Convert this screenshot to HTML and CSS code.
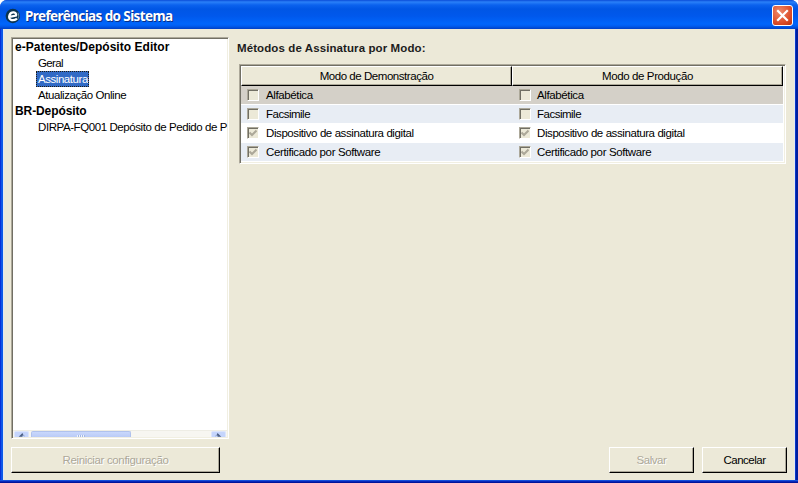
FILE: index.html
```html
<!DOCTYPE html>
<html lang="pt-BR">
<head>
<meta charset="utf-8">
<title>Preferências do Sistema</title>
<link rel="stylesheet" href="styles.css">
</head>
<body>
<div class="window">
  <header class="titlebar">
    <svg class="app-icon" width="16" height="16" viewBox="0 0 16 16"><circle cx="7.8" cy="8" r="7.2" fill="#0b3450"/><path d="M4.5 8.8L11 7.6C12.2 3.8 6.2 3.2 4.6 7C3 11.4 7 13.8 12 10.7" fill="none" stroke="#fff" stroke-width="2.3"/><path d="M13 4.5Q15 8 12.5 12" fill="none" stroke="#6f93ad" stroke-width="1"/></svg>
    <h1 class="title">Preferências do Sistema</h1>
    <button class="close" aria-label="Fechar"><svg width="19" height="19" viewBox="0 0 19 19"><path d="M5 5L14 14M14 5L5 14" stroke="#fff" stroke-width="2.2" stroke-linecap="square"/></svg></button>
  </header>
  <div class="body">
    <main class="main">
      <nav class="tree">
        <ul class="nodes">
          <li class="group"><span class="group-a">e-Patentes/Depósito Editor</span></li>
          <li class="leaf"><span class="geral">Geral</span></li>
          <li class="leaf"><span class="selected">Assinatura</span></li>
          <li class="leaf"><span class="online">Atualização Online</span></li>
          <li class="group"><span class="group-b">BR-Depósito</span></li>
          <li class="leaf"><span class="form">DIRPA-FQ001 Depósito de Pedido de P</span></li>
        </ul>
        <div class="scrollbar">
          <span class="arrow"><svg width="14" height="5" viewBox="0 0 14 5"><path d="M8 1L4 5H8V3.5H10V5" fill="#4d6185"/></svg></span>
          <span class="thumb"><i class="grip"></i></span>
          <span class="arrow end"><svg width="14" height="5" viewBox="0 0 14 5"><path d="M6 1L10 5H6V3.5H4V5" fill="#4d6185"/></svg></span>
        </div>
      </nav>
      <section class="panel">
        <h2 class="heading">Métodos de Assinatura por Modo:</h2>
        <div class="grid">
          <div class="th"><span class="demo">Modo de Demonstração</span></div>
          <div class="th"><span class="prod">Modo de Produção</span></div>
          <div class="td current"><i class="box"></i><span class="alfa">Alfabética</span></div>
          <div class="td current second"><i class="box"></i><span class="alfa">Alfabética</span></div>
          <div class="td tint"><i class="box"></i><span class="facs">Facsimile</span></div>
          <div class="td tint second"><i class="box"></i><span class="facs">Facsimile</span></div>
          <div class="td"><i class="box"><svg class="tick" width="8" height="8" viewBox="0 0 8 8"><path d="M.5 3.5L3 6L7.5 1.5" fill="none" stroke="#aca899" stroke-width="2"/></svg></i><span class="disp">Dispositivo de assinatura digital</span></div>
          <div class="td second"><i class="box"><svg class="tick" width="8" height="8" viewBox="0 0 8 8"><path d="M.5 3.5L3 6L7.5 1.5" fill="none" stroke="#aca899" stroke-width="2"/></svg></i><span class="disp">Dispositivo de assinatura digital</span></div>
          <div class="td tint"><i class="box"><svg class="tick" width="8" height="8" viewBox="0 0 8 8"><path d="M.5 3.5L3 6L7.5 1.5" fill="none" stroke="#aca899" stroke-width="2"/></svg></i><span class="cert">Certificado por Software</span></div>
          <div class="td tint second"><i class="box"><svg class="tick" width="8" height="8" viewBox="0 0 8 8"><path d="M.5 3.5L3 6L7.5 1.5" fill="none" stroke="#aca899" stroke-width="2"/></svg></i><span class="cert">Certificado por Software</span></div>
        </div>
      </section>
    </main>
    <footer class="footer">
      <button class="btn reset" disabled>Reiniciar configuração</button>
      <button class="btn save" disabled>Salvar</button>
      <button class="btn cancel">Cancelar</button>
    </footer>
  </div>
  <div class="frame-bottom"></div>
</div>
</body>
</html>
```
FILE: styles.css
```css
* { box-sizing: border-box; }
body { margin: 0; background: #fff; font: 11.5px/16px "Liberation Sans", Arial, sans-serif; color: #000; overflow: hidden; }
.window { width: 798px; height: 483px; border-radius: 7px 7px 0 0; background: linear-gradient(90deg, #0831d9 0 1px, #1055e8 1px 2px, #0c5be8 2px 3px, #0848d8 3px 795px, #0838c8 795px 796px, #001ea0 796px); overflow: hidden; display: flex; flex-direction: column; }
.titlebar { height: 29px; flex: none; display: flex; align-items: center; padding: 2px 5px 0 5px; background: linear-gradient(180deg, #0a4cd8 0, #2a80f8 2px, #0b62ee 5px, #0056e5 9px, #0058ec 16px, #0066fb 24px, #005df0 26px, #0040c4 29px); }
.app-icon { flex: none; }
.title { margin: 0 0 0 4px; font: bold 13.5px/18px "Noto Sans", sans-serif; letter-spacing: -.6px; color: #fff; text-shadow: 1px 1px 0 #0a2f86; white-space: nowrap; }
.close { margin-left: auto; width: 21px; height: 21px; padding: 0; border: 1px solid #fff; border-radius: 3px; background: radial-gradient(circle at 35% 30%, #ee8a6c, #dc4b26 65%, #b8330e); display: grid; place-items: center; }
.body { margin: 0 3px; height: 451px; background: #ece9d8; padding: 8px 7px 0; display: flex; flex-direction: column; border-left: 1px solid #e4e8f2; border-right: 1px solid #e4e8f2; }
.frame-bottom { height: 3px; background: linear-gradient(#1450dc 0 1px, #0828b8 1px 2px, #00149a 2px); }
.main { display: flex; gap: 9px; height: 402px; }
.tree { width: 218px; height: 402px; flex: none; background: #fff; border: 1px solid; border-color: #aca899 #fff #fff #aca899; box-shadow: inset 1px 1px #716f64, inset -1px -1px #f1efe2; padding: 1px; display: flex; flex-direction: column; overflow: hidden; }
.nodes { list-style: none; margin: 0; padding: 0; flex: 1; }
.nodes li { height: 16px; white-space: nowrap; display: flex; }
.group { padding-left: 2px; font-weight: bold; font-size: 12px; }
.leaf { padding-left: 25px; }
.group-a { letter-spacing: .04px; }
.group-b { letter-spacing: -.1px; }
.geral { letter-spacing: -.65px; }
.online { letter-spacing: -.43px; }
.form { letter-spacing: -.42px; }
.selected { background: #316ac5; color: #fff; outline: 1px dotted #201c10; outline-offset: -1px; letter-spacing: -.45px; margin-left: -2px; padding: 0 1px 0 2px; }
.scrollbar { height: 7px; flex: none; display: flex; background: #f7f6f1; border-top: 1px solid #eeede5; padding-left: 1px; }
.arrow { width: 15px; height: 6px; background: #c5d5fc; border: 1px solid #dce5fb; border-bottom: 0; border-radius: 2px 2px 0 0; display: flex; }
.end { margin-left: auto; margin-right: 1px; }
.thumb { width: 100px; height: 6px; margin-left: 2px; background: linear-gradient(#c9d8fc, #bacbf6); border: 1px solid #b0c2ed; border-bottom: 0; border-radius: 2px 2px 0 0; display: flex; justify-content: center; }
.grip { width: 8px; height: 2px; margin-top: 3px; background: repeating-linear-gradient(90deg, #eef4fe 0 1px, #a3b7e5 1px 2px); }
.panel { flex: 1; min-width: 0; padding-top: 3px; }
.heading { margin: 0 0 8px -1px; font: bold 11.5px/16px "Liberation Sans", Arial, sans-serif; letter-spacing: .1px; color: #1c1c1c; white-space: nowrap; }
.grid { width: 547px; height: 100px; margin-left: 1px; display: grid; grid-template-columns: 271px 271px; grid-template-rows: 20px repeat(4, 19px); background: #fff; border: 1px solid; border-color: #aca899 #fff #fff #aca899; box-shadow: inset 1px 1px #716f64, inset -1px -1px #f1efe2; padding: 1px; }
.th { background: #ece9d8; border: 1px solid; border-color: #fff #000 #000 #fff; box-shadow: inset -1px -1px #aca899; display: flex; justify-content: center; align-items: center; line-height: 16px; }
.demo, .prod { white-space: nowrap; }
.demo { letter-spacing: -.45px; }
.prod { letter-spacing: -.4px; }
.td { background: #fff; border-bottom: 1px solid #fff; display: flex; align-items: center; padding-left: 6px; white-space: nowrap; }
.td.current { background: #d4d0c8; }
.td.tint { background: #e8edf4; }
.box { width: 12px; height: 12px; margin-right: 7px; background: #ece9d8; border: 1px solid; border-color: #aca899 #fff #fff #aca899; box-shadow: inset 1px 1px #716f64; display: grid; place-items: center; }
.second { padding-left: 7px; }
.second .box { margin-right: 6px; }
.tick { display: block; }
.alfa, .cert { letter-spacing: -.38px; }
.facs { letter-spacing: -.5px; }
.disp { letter-spacing: -.41px; }
.footer { display: flex; margin-top: 8px; height: 26px; }
.btn { height: 26px; padding: 0; border: 1px solid; border-color: #fff #000 #000 #fff; border-radius: 0; background: #ece9d8; box-shadow: inset -1px -1px #aca899; font: 11.5px/16px "Liberation Sans", Arial, sans-serif; color: #000; }
.btn:disabled { color: #aca899; text-shadow: 1px 1px #fff; }
.reset { width: 209px; letter-spacing: -.35px; }
.save { width: 85px; margin-left: auto; letter-spacing: -.45px; }
.cancel { width: 85px; margin-left: 8px; letter-spacing: -.5px; }
```
